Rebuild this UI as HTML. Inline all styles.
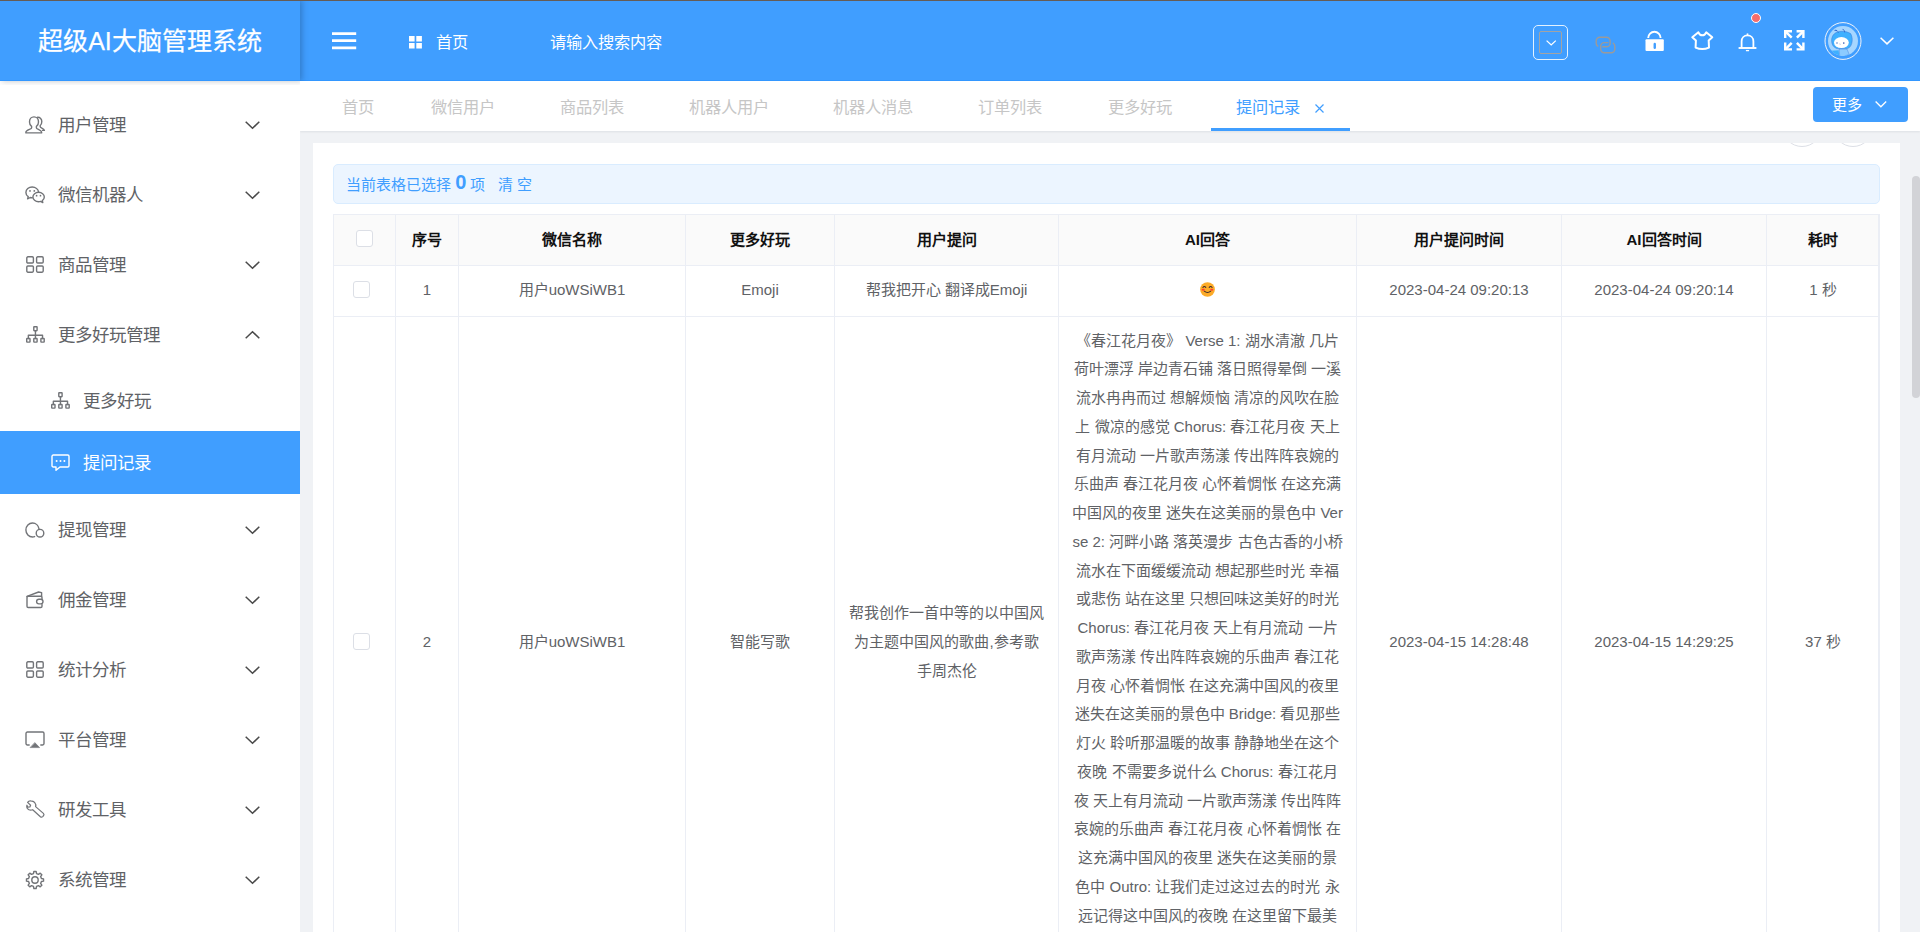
<!DOCTYPE html>
<html lang="zh-CN">
<head>
<meta charset="utf-8">
<title>超级AI大脑管理系统</title>
<style>
*{box-sizing:border-box;margin:0;padding:0}
html,body{width:1920px;height:932px;overflow:hidden;background:#f0f2f5;font-family:"Liberation Sans",sans-serif;color:#606266}
body{position:relative}
svg{display:block;position:absolute;overflow:visible}
body>svg,body>div.hi{z-index:6}
/* ---------- header ---------- */
#top{position:absolute;left:0;top:0;width:1920px;height:81px;background:#409eff;border-bottom:1px solid #3397ff;z-index:4}
#topline{position:absolute;left:0;top:0;width:1920px;height:1px;background:#665c55;z-index:9}
#logo{position:absolute;left:0;top:0;width:300px;height:81px;background:#409eff;border-bottom:1px solid #3397ff;box-shadow:2px 0 6px rgba(0,21,41,.25);clip-path:polygon(0 0,312px 0,312px 81px,300px 81px,300px 85px,0 85px);z-index:5;-webkit-text-stroke:0.25px #fff;color:#fff;font-size:25px;line-height:80px;text-align:center;white-space:nowrap}
#logo span{position:relative;top:0.5px}
.hd{position:absolute;color:#fff;white-space:nowrap;z-index:6}
/* ---------- sidebar ---------- */
#side{position:absolute;left:0;top:80px;width:300px;height:852px;background:#fff;z-index:2}
.mi{position:absolute;left:0;width:300px;height:70px;line-height:70px;font-size:17.5px;color:#606266;white-space:nowrap}
.mi .t{position:absolute;left:58px;top:1px}
.mi.sub{height:63px;line-height:63px}
.mi.sub .t{left:83px}
.mi.act{background:#409eff;color:#fff}
/* ---------- tabs ---------- */
#tabs{position:absolute;left:300px;top:80px;width:1620px;height:51px;background:#fff;box-shadow:0 1px 2px rgba(0,21,41,.08)}
.tab{position:absolute;top:0;height:50px;line-height:54px;font-size:16.25px;color:#c6c6c6;white-space:nowrap}
.tab.on{color:#409eff}
#tabline{position:absolute;left:911px;top:48px;width:139px;height:2.5px;background:#409eff}
#more{position:absolute;left:1513px;top:7px;width:95px;height:35px;border-radius:4px;background:#409eff;color:#fff;font-size:15px;line-height:35px}
#more b{position:absolute;left:19px;top:0;font-weight:normal}
/* ---------- card ---------- */
#card{position:absolute;left:313px;top:143px;width:1587px;height:789px;background:#fff;overflow:hidden}
#alert{position:absolute;left:20px;top:21px;width:1547px;height:40px;border:1px solid #d9ecff;background:#ecf5ff;border-radius:5px;color:#409eff;font-size:15px;line-height:38px;white-space:nowrap}
#alert .a{position:absolute;left:12px;top:-1px}
#alert .n{font-size:20px;font-weight:bold;position:relative;top:-1px}
/* ---------- table ---------- */
#tbl{position:absolute;left:20px;top:71px;width:1547px;border-collapse:separate;border-spacing:0;table-layout:fixed;border-top:1px solid #ebeef5;border-left:1px solid #ebeef5;font-size:15px;color:#606266}
#tbl th,#tbl td{border-right:1px solid #ebeef5;border-bottom:1px solid #ebeef5;text-align:center;vertical-align:middle;padding:0;line-height:28.75px}
#tbl th{height:51px;background:#fafafa;color:#111;font-weight:bold}
#tbl td{background:#fff}
#tbl tr.r1 td{height:51px}
#tbl td{padding-bottom:2px}
.cb{display:inline-block;width:17px;height:17px;border:1px solid #dcdfe6;border-radius:3px;background:#fff;vertical-align:middle}
#tbl td.ans{padding:9.5px 0 10.5px;white-space:nowrap}
.circ{position:absolute;top:-36.5px;width:40px;height:40px;border-radius:50%;border:1px solid #dcdfe6;background:#fff}
/* scrollbar */
#sb{position:absolute;left:1912px;top:176px;width:8px;height:222px;border-radius:4px;background:#d2d3d7}
</style>
</head>
<body>
<div id="top"></div>
<div id="topline"></div>
<div id="logo"><span>超级AI大脑管理系统</span></div>

<!-- header left -->
<svg style="left:332px;top:32px" width="25" height="18" viewBox="0 0 25 18"><path d="M0 1.6H24.2M0 8.6H24.2M0 15.9H24.2" stroke="#fff" stroke-width="2.8" fill="none"/></svg>
<svg style="left:408.8px;top:35.8px" width="12.9" height="12.5" viewBox="0 0 12.9 12.5"><path d="M0 0h5.6v5.4h-5.6zM7.3 0h5.6v5.4h-5.6zM0 7.1h5.6v5.4h-5.6zM7.3 7.1h5.6v5.4h-5.6z" fill="#fff"/></svg>
<div class="hd" style="left:436.4px;top:0;line-height:84px;font-size:16.25px">首页</div>
<div class="hd" style="left:550px;top:0;line-height:84px;font-size:16.25px">请输入搜索内容</div>


<!-- header right -->
<div class="hi" style="position:absolute;left:1533px;top:25px;width:35px;height:35px;border:1px solid rgba(255,255,255,.85);border-radius:5px"></div>
<div class="hi" style="position:absolute;left:1539px;top:31px;width:23px;height:23px;border:1px solid #a3a3a3;border-radius:2px"></div>
<svg style="left:1545.6px;top:39.8px" width="10.4" height="5.6" viewBox="0 0 10.4 5.6"><path d="M0.6 0.6L5.2 4.9L9.8 0.6" stroke="#fff" stroke-width="1.3" fill="none"/></svg>
<svg style="left:1595px;top:35.5px" width="21" height="18" viewBox="0 0 21 18" fill="none" stroke="#9c9a9a" stroke-width="1.4" stroke-linecap="round"><path d="M7.8 10.8H11.5A3.6 3.6 0 0 0 15.1 7.2V4.8A3.6 3.6 0 0 0 11.5 1.2H4.8A3.6 3.6 0 0 0 1.2 4.8V7.2A3.6 3.6 0 0 0 2.7 10.1"/><path d="M12.8 6.6H9.3A3.6 3.6 0 0 0 5.7 10.2V13.1A3.6 3.6 0 0 0 9.3 16.7H16.2A3.6 3.6 0 0 0 19.8 13.1V10.2A3.6 3.6 0 0 0 18.3 7.3"/></svg>
<svg style="left:1644.5px;top:29.8px" width="19" height="22" viewBox="0 0 19 22"><path d="M3.2 8.1V7.95A6.2 6.2 0 0 1 15.6 7.95V8.1" stroke="#fff" stroke-width="1.9" fill="none"/><rect x="0.5" y="9.3" width="18.3" height="11.8" rx="1" fill="#fff"/><rect x="8.55" y="12.8" width="2.4" height="6.1" rx="1.2" fill="#409eff"/></svg>
<svg style="left:1690.5px;top:31px" width="22.6" height="20" viewBox="0 0 22.6 20" fill="none" stroke="#fff" stroke-width="2" stroke-linejoin="round"><path d="M7.4 1.3L1.3 6.3L4.9 9.5L4.6 16.6Q11.3 19.6 18 16.6L17.7 9.5L21.3 6.3L15.2 1.3C14.4 3.3 13 4.3 11.3 4.3C9.6 4.3 8.2 3.3 7.4 1.3Z"/></svg>
<svg style="left:1738px;top:33px" width="19" height="19" viewBox="0 0 19 19" fill="none" stroke="#fff"><path d="M3.6 14.6V8.4C3.6 4.8 6.1 2.4 9.5 2.4C12.9 2.4 15.4 4.8 15.4 8.4V14.6" stroke-width="1.8"/><path d="M0.6 15H18.4" stroke-width="1.9"/><path d="M9.5 0.4V2.6" stroke-width="1.6"/><path d="M7.9 17.6H11.1" stroke-width="1.3"/></svg>
<div class="hi" style="position:absolute;left:1750.8px;top:13px;width:10.4px;height:10.4px;border-radius:50%;background:#f56c6c;border:1px solid #fff"></div>
<svg style="left:1784px;top:30.2px" width="20.6" height="20.6" viewBox="0 0 20.6 20.6" fill="none" stroke="#fff" stroke-width="2.4"><path d="M1.2 8V1.2H8M12.6 1.2H19.4V8M1.2 12.6V19.4H8M19.4 12.6V19.4H12.6" stroke-linejoin="miter"/><path d="M1.8 1.8L7.7 7.7M18.8 1.8L12.9 7.7M1.8 18.8L7.7 12.9M18.8 18.8L12.9 12.9" stroke-width="2.5"/></svg>
<svg style="left:1823.5px;top:22px" width="38" height="38" viewBox="0 0 38 38"><defs><clipPath id="avc"><circle cx="19" cy="19" r="15"/></clipPath></defs><ellipse cx="19" cy="19" rx="18" ry="18.4" fill="none" stroke="#f1f3f8" stroke-width="1"/><circle cx="19" cy="19" r="15" fill="#a6d6ff"/><g clip-path="url(#avc)"><path d="M6.5 28.8L14.6 28.2L15.6 36L4 36Z" fill="#3fb0ff"/><path d="M15 27L23 27L25.2 32.5L20.5 34L20.5 36L16 36Z" fill="#8ccbff" stroke="#3a78d8" stroke-width="0.4"/><path d="M7.6 18.5C7.6 13 11.5 9.3 17.6 9.3C21 9.3 24 10 26.6 11.6C27.8 13.6 28.4 16 28.2 18.6C28 22.6 26.2 25.8 23.4 26.6L12.6 26.6C9.4 25.2 7.6 22.4 7.6 18.5Z" fill="#3fb0ff" stroke="#3a78d8" stroke-width="0.5"/><ellipse cx="17.4" cy="20.6" rx="7.4" ry="5.5" fill="#fff"/><path d="M20.6 10.4C20.6 8.6 20 7.6 18.6 7.4" stroke="#2c62c8" stroke-width="0.9" fill="none"/><path d="M10.6 8.5C11.4 8.1 12.4 8.2 13 8.8" stroke="#2c62c8" stroke-width="1.1" fill="none"/><path d="M13 8.8C14 9.6 14.4 10.4 14.6 11" stroke="#2c62c8" stroke-width="0.5" fill="none"/><circle cx="13" cy="21.1" r="0.75" fill="#4a6fc0"/><circle cx="19.8" cy="21.1" r="0.8" fill="#2f55b0"/><path d="M15.8 21.6L16.2 22.6" stroke="#4a6fc0" stroke-width="0.5" fill="none"/></g></svg>
<svg style="left:1879.5px;top:36.8px" width="14" height="8" viewBox="0 0 14 8"><path d="M0.6 0.7L7 6.9L13.4 0.7" stroke="#fff" stroke-width="1.5" fill="none"/></svg>
<div id="side">
<div class="mi" style="top:9px"><span style="color:#727478"><svg style="left:25px;top:27px" width="20" height="18" viewBox="0 0 20 18" fill="none" stroke="currentColor" stroke-width="1.4" stroke-linejoin="round" stroke-linecap="round"><path d="M6.6 10.4C5.1 9.4 4.5 7.9 4.5 6C4.5 3 6.4 0.9 9 0.9C11.6 0.9 13.5 3 13.5 6C13.5 7.9 12.9 9.4 11.4 10.4L11.4 11.9C11.4 13.1 16.6 13.9 16.6 16.1L16.6 16.9L0.9 16.9L0.9 16.1C0.9 13.9 6.6 13.1 6.6 11.9Z"/><path d="M12.6 1.3C15.1 1.2 16.8 3 16.8 5.5C16.8 7.4 16.2 8.7 15.2 9.5L15.2 10.7C15.2 11.8 19.4 12.5 19.4 14.4L17.6 14.4"/></svg></span><span class="t">用户管理</span><svg style="left:244.5px;top:31.5px" width="15" height="8" viewBox="0 0 15 8" fill="none" stroke="currentColor" stroke-width="1.4" stroke-linejoin="round" stroke-linecap="round"><path d="M0.7 0.7L7.5 7.3L14.3 0.7" stroke-width="1.5" stroke="#4a4a4a" stroke-linecap="butt" stroke-linejoin="miter"/></svg></div>
<div class="mi" style="top:79px"><span style="color:#727478"><svg style="left:25px;top:27px" width="20" height="18" viewBox="0 0 20 18" fill="none" stroke="currentColor" stroke-width="1.4" stroke-linejoin="round" stroke-linecap="round"><path d="M13.6 6.2C13.2 3.3 10.5 1 7.2 1C3.7 1 0.9 3.4 0.9 6.4C0.9 8.1 1.8 9.6 3.2 10.6L2.6 12.9L5.2 11.5C5.8 11.7 6.5 11.8 7.2 11.8"/><path d="M13.6 6.3C16.8 6.3 19.3 8.4 19.3 11C19.3 12.4 18.5 13.7 17.3 14.6L17.8 16.6L15.6 15.4C15 15.6 14.3 15.7 13.6 15.7C10.4 15.7 7.9 13.6 7.9 11C7.9 8.4 10.4 6.3 13.6 6.3Z"/><g fill="currentColor" stroke="none"><circle cx="5" cy="4.9" r="0.9"/><circle cx="9.3" cy="4.9" r="0.9"/><circle cx="11.6" cy="9.7" r="0.85"/><circle cx="15.5" cy="9.7" r="0.85"/></g></svg></span><span class="t">微信机器人</span><svg style="left:244.5px;top:31.5px" width="15" height="8" viewBox="0 0 15 8" fill="none" stroke="currentColor" stroke-width="1.4" stroke-linejoin="round" stroke-linecap="round"><path d="M0.7 0.7L7.5 7.3L14.3 0.7" stroke-width="1.5" stroke="#4a4a4a" stroke-linecap="butt" stroke-linejoin="miter"/></svg></div>
<div class="mi" style="top:149px"><span style="color:#727478"><svg style="left:26px;top:27px" width="18" height="17" viewBox="0 0 18 17" fill="none" stroke="currentColor" stroke-width="1.4" stroke-linejoin="round" stroke-linecap="round"><rect x="0.8" y="0.8" width="6.6" height="6.2" rx="1.1"/><rect x="10.6" y="0.8" width="6.6" height="6.2" rx="1.1"/><rect x="0.8" y="10" width="6.6" height="6.2" rx="1.1"/><rect x="10.6" y="10" width="6.6" height="6.2" rx="1.1"/></svg></span><span class="t">商品管理</span><svg style="left:244.5px;top:31.5px" width="15" height="8" viewBox="0 0 15 8" fill="none" stroke="currentColor" stroke-width="1.4" stroke-linejoin="round" stroke-linecap="round"><path d="M0.7 0.7L7.5 7.3L14.3 0.7" stroke-width="1.5" stroke="#4a4a4a" stroke-linecap="butt" stroke-linejoin="miter"/></svg></div>
<div class="mi" style="top:219px"><span style="color:#727478"><svg style="left:25.5px;top:27.3px" width="18.9" height="16.8" viewBox="0 0 18.9 16.8" fill="none" stroke="currentColor" stroke-width="1.4" stroke-linejoin="round" stroke-linecap="round"><rect x="7.8" y="0.7" width="3.3" height="4" rx="0.4"/><path d="M9.45 4.7V9.3M2.35 12.5V9.3H16.55V12.5M9.45 9.3V12.5"/><rect x="0.7" y="12.5" width="3.3" height="3.6" rx="0.4"/><rect x="7.8" y="12.5" width="3.3" height="3.6" rx="0.4"/><rect x="14.9" y="12.5" width="3.3" height="3.6" rx="0.4"/></svg></span><span class="t">更多好玩管理</span><svg style="left:244.5px;top:32px" width="15" height="8" viewBox="0 0 15 8" fill="none" stroke="currentColor" stroke-width="1.4" stroke-linejoin="round" stroke-linecap="round"><path d="M0.7 7.3L7.5 0.7L14.3 7.3" stroke-width="1.5" stroke="#4a4a4a" stroke-linecap="butt" stroke-linejoin="miter"/></svg></div>
<div class="mi sub" style="top:289px"><span style="color:#727478"><svg style="left:50.5px;top:23.3px" width="18.9" height="16.8" viewBox="0 0 18.9 16.8" fill="none" stroke="currentColor" stroke-width="1.4" stroke-linejoin="round" stroke-linecap="round"><rect x="7.8" y="0.7" width="3.3" height="4" rx="0.4"/><path d="M9.45 4.7V9.3M2.35 12.5V9.3H16.55V12.5M9.45 9.3V12.5"/><rect x="0.7" y="12.5" width="3.3" height="3.6" rx="0.4"/><rect x="7.8" y="12.5" width="3.3" height="3.6" rx="0.4"/><rect x="14.9" y="12.5" width="3.3" height="3.6" rx="0.4"/></svg></span><span class="t">更多好玩</span></div>
<div class="mi sub act" style="top:351px"><span style="color:#fff"><svg style="left:50.5px;top:22.5px" width="19" height="17.5" viewBox="0 0 19 17.5" fill="none" stroke="currentColor" stroke-width="1.4" stroke-linejoin="round" stroke-linecap="round"><path d="M1 2.3C1 1.6 1.6 1 2.3 1H16.7C17.4 1 18 1.6 18 2.3V11.7C18 12.4 17.4 13 16.7 13H9L5 16.3V13H2.3C1.6 13 1 12.4 1 11.7Z"/><g fill="currentColor" stroke="none"><circle cx="5.6" cy="7" r="1"/><circle cx="9.5" cy="7" r="1"/><circle cx="13.4" cy="7" r="1"/></g></svg></span><span class="t">提问记录</span></div>
<div class="mi" style="top:414px"><span style="color:#727478"><svg style="left:25px;top:27.5px" width="20" height="16" viewBox="0 0 20 16" fill="none" stroke="currentColor" stroke-width="1.4" stroke-linejoin="round" stroke-linecap="round"><path d="M9.6 14.6C8.9 14.9 8.2 15 7.5 15C3.9 15 0.9 11.9 0.9 8C0.9 4.1 3.9 1 7.5 1C10.8 1 13.5 3.5 14 6.8"/><circle cx="15" cy="11.2" r="3.8"/></svg></span><span class="t">提现管理</span><svg style="left:244.5px;top:31.5px" width="15" height="8" viewBox="0 0 15 8" fill="none" stroke="currentColor" stroke-width="1.4" stroke-linejoin="round" stroke-linecap="round"><path d="M0.7 0.7L7.5 7.3L14.3 0.7" stroke-width="1.5" stroke="#4a4a4a" stroke-linecap="butt" stroke-linejoin="miter"/></svg></div>
<div class="mi" style="top:484px"><span style="color:#727478"><svg style="left:26px;top:26.5px" width="18" height="17.5" viewBox="0 0 18 17.5" fill="none" stroke="currentColor" stroke-width="1.4" stroke-linejoin="round" stroke-linecap="round"><path d="M1 5.4L12.6 1L15.6 1.6V5.2"/><path d="M16 8.2V6.4C16 5.7 15.5 5.2 14.8 5.2H2.2C1.5 5.2 1 5.7 1 6.4V15.3C1 16 1.5 16.5 2.2 16.5H14.8C15.5 16.5 16 16 16 15.3V13.4"/><rect x="10.6" y="8.3" width="6.4" height="4.6" rx="2.3"/></svg></span><span class="t">佣金管理</span><svg style="left:244.5px;top:31.5px" width="15" height="8" viewBox="0 0 15 8" fill="none" stroke="currentColor" stroke-width="1.4" stroke-linejoin="round" stroke-linecap="round"><path d="M0.7 0.7L7.5 7.3L14.3 0.7" stroke-width="1.5" stroke="#4a4a4a" stroke-linecap="butt" stroke-linejoin="miter"/></svg></div>
<div class="mi" style="top:554px"><span style="color:#727478"><svg style="left:26px;top:27px" width="18" height="17" viewBox="0 0 18 17" fill="none" stroke="currentColor" stroke-width="1.4" stroke-linejoin="round" stroke-linecap="round"><rect x="0.8" y="0.8" width="6.6" height="6.2" rx="1.1"/><rect x="10.6" y="0.8" width="6.6" height="6.2" rx="1.1"/><rect x="0.8" y="10" width="6.6" height="6.2" rx="1.1"/><rect x="10.6" y="10" width="6.6" height="6.2" rx="1.1"/></svg></span><span class="t">统计分析</span><svg style="left:244.5px;top:31.5px" width="15" height="8" viewBox="0 0 15 8" fill="none" stroke="currentColor" stroke-width="1.4" stroke-linejoin="round" stroke-linecap="round"><path d="M0.7 0.7L7.5 7.3L14.3 0.7" stroke-width="1.5" stroke="#4a4a4a" stroke-linecap="butt" stroke-linejoin="miter"/></svg></div>
<div class="mi" style="top:624px"><span style="color:#727478"><svg style="left:25px;top:27px" width="20" height="17.5" viewBox="0 0 20 17.5" fill="none" stroke="currentColor" stroke-width="1.4" stroke-linejoin="round" stroke-linecap="round"><path d="M4.2 14H2.4C1.6 14 1 13.4 1 12.6V2.4C1 1.6 1.6 1 2.4 1H17.6C18.4 1 19 1.6 19 2.4V12.6C19 13.4 18.4 14 17.6 14H15.8"/><path d="M10 11.8L14.6 16.6H5.4Z" fill="currentColor" stroke-width="0.6"/></svg></span><span class="t">平台管理</span><svg style="left:244.5px;top:31.5px" width="15" height="8" viewBox="0 0 15 8" fill="none" stroke="currentColor" stroke-width="1.4" stroke-linejoin="round" stroke-linecap="round"><path d="M0.7 0.7L7.5 7.3L14.3 0.7" stroke-width="1.5" stroke="#4a4a4a" stroke-linecap="butt" stroke-linejoin="miter"/></svg></div>
<div class="mi" style="top:694px"><span style="color:#727478"><svg style="left:26px;top:26px" width="18.5" height="18" viewBox="0 0 18.5 18" fill="none" stroke="currentColor" stroke-width="1.4" stroke-linejoin="round" stroke-linecap="round"><path d="M6.1 1.2C4.4 0.6 2.5 1 1.6 2.4L4.6 5.2L3.9 6.9L1.8 7.1L0.9 5.2C0.5 7 1.2 8.9 2.9 9.7C4.2 10.3 5.5 10.2 6.7 9.7L14.4 16.7C15.1 17.3 16.1 17.2 16.7 16.6L17.6 15.5C18.1 14.9 18 14 17.4 13.4L9.6 6.6C10 5.3 9.8 3.9 8.9 2.8C8.2 2 7.2 1.4 6.1 1.2Z" stroke-width="1.2"/></svg></span><span class="t">研发工具</span><svg style="left:244.5px;top:31.5px" width="15" height="8" viewBox="0 0 15 8" fill="none" stroke="currentColor" stroke-width="1.4" stroke-linejoin="round" stroke-linecap="round"><path d="M0.7 0.7L7.5 7.3L14.3 0.7" stroke-width="1.5" stroke="#4a4a4a" stroke-linecap="butt" stroke-linejoin="miter"/></svg></div>
<div class="mi" style="top:764px"><span style="color:#727478"><svg style="left:26px;top:26.5px" width="18" height="18" viewBox="0 0 18 18" fill="none" stroke="currentColor" stroke-width="1.4" stroke-linejoin="round" stroke-linecap="round"><path d="M7.46 2.58 L7.86 0.48 L10.14 0.48 L10.54 2.58 L12.45 3.37 L14.22 2.16 L15.84 3.78 L14.63 5.55 L15.42 7.46 L17.52 7.86 L17.52 10.14 L15.42 10.54 L14.63 12.45 L15.84 14.22 L14.22 15.84 L12.45 14.63 L10.54 15.42 L10.14 17.52 L7.86 17.52 L7.46 15.42 L5.55 14.63 L3.78 15.84 L2.16 14.22 L3.37 12.45 L2.58 10.54 L0.48 10.14 L0.48 7.86 L2.58 7.46 L3.37 5.55 L2.16 3.78 L3.78 2.16 L5.55 3.37Z"/><circle cx="9" cy="9" r="3.2"/></svg></span><span class="t">系统管理</span><svg style="left:244.5px;top:31.5px" width="15" height="8" viewBox="0 0 15 8" fill="none" stroke="currentColor" stroke-width="1.4" stroke-linejoin="round" stroke-linecap="round"><path d="M0.7 0.7L7.5 7.3L14.3 0.7" stroke-width="1.5" stroke="#4a4a4a" stroke-linecap="butt" stroke-linejoin="miter"/></svg></div>
</div>
<div id="tabs">
<div class="tab" style="left:41.5px">首页</div>
<div class="tab" style="left:131px">微信用户</div>
<div class="tab" style="left:260px">商品列表</div>
<div class="tab" style="left:388.5px">机器人用户</div>
<div class="tab" style="left:533px">机器人消息</div>
<div class="tab" style="left:678px">订单列表</div>
<div class="tab" style="left:807.5px">更多好玩</div>
<div class="tab on" style="left:936px">提问记录</div>
<svg style="left:1014.5px;top:24px" width="9" height="9" viewBox="0 0 9 9"><path d="M0.5 0.5L8.5 8.5M8.5 0.5L0.5 8.5" stroke="#409eff" stroke-width="1.2" fill="none"/></svg>
<div id="tabline"></div>
<div id="more"><b>更多</b><svg style="left:61.7px;top:14.3px" width="11.8" height="6.4" viewBox="0 0 11.8 6.4"><path d="M0.6 0.6L5.9 5.7L11.2 0.6" stroke="#fff" stroke-width="1.35" fill="none"/></svg></div>
</div>
<div id="card">
<div class="circ" style="left:1468.5px"></div><div class="circ" style="left:1520px"></div>
<div id="alert"><span class="a">当前表格已选择 <span class="n">0</span> 项&nbsp;&nbsp;&nbsp;清 空</span></div>
<div style="position:absolute;left:1565px;top:71px;width:2px;height:720px;background:#ebeef5;z-index:2"></div>
<table id="tbl"><colgroup><col style="width:62px"><col style="width:63px"><col style="width:227px"><col style="width:149px"><col style="width:224px"><col style="width:298px"><col style="width:205px"><col style="width:205px"><col style="width:113px"></colgroup>
<tr><th><span class="cb" style="position:relative;left:-0.2px;top:-2px"></span></th><th>序号</th><th>微信名称</th><th>更多好玩</th><th>用户提问</th><th>AI回答</th><th>用户提问时间</th><th>AI回答时间</th><th>耗时</th></tr>
<tr class="r1"><td><span class="cb" style="position:relative;left:-3.2px;top:-1px"></span></td><td>1</td><td>用户uoWSiWB1</td><td>Emoji</td><td>帮我把开心 翻译成Emoji</td><td><svg style="position:relative;display:inline-block;vertical-align:middle;top:-1px" width="15" height="15" viewBox="0 0 15 15"><circle cx="7.5" cy="7.5" r="7.35" fill="#fcab28"/><path d="M2.9 5.5Q4.3 3.6 5.8 5.4M9.2 5.4Q10.7 3.6 12.1 5.5" stroke="#3b2a2e" stroke-width="1.05" fill="none" stroke-linecap="round"/><path d="M4.3 9.2Q7.5 11.9 10.7 9.2" stroke="#3b2a2e" stroke-width="1.05" fill="none" stroke-linecap="round"/><ellipse cx="3.2" cy="7.7" rx="1.55" ry="0.95" fill="#ff3b2f"/><ellipse cx="11.8" cy="7.7" rx="1.55" ry="0.95" fill="#ff3b2f"/></svg></td><td>2023-04-24 09:20:13</td><td>2023-04-24 09:20:14</td><td>1 秒</td></tr>
<tr class="r2"><td><span class="cb" style="position:relative;left:-3.2px;top:-1px"></span></td><td>2</td><td>用户uoWSiWB1</td><td>智能写歌</td><td>帮我创作一首中等的以中国风<br>为主题中国风的歌曲,参考歌<br>手周杰伦</td><td class="ans">《春江花月夜》 Verse 1: 湖水清澈 几片<br>荷叶漂浮 岸边青石铺 落日照得晕倒 一溪<br>流水冉冉而过 想解烦恼 清凉的风吹在脸<br>上 微凉的感觉 Chorus: 春江花月夜 天上<br>有月流动 一片歌声荡漾 传出阵阵哀婉的<br>乐曲声 春江花月夜 心怀着惆怅 在这充满<br>中国风的夜里 迷失在这美丽的景色中 Ver<br>se 2: 河畔小路 落英漫步 古色古香的小桥<br>流水在下面缓缓流动 想起那些时光 幸福<br>或悲伤 站在这里 只想回味这美好的时光<br>Chorus: 春江花月夜 天上有月流动 一片<br>歌声荡漾 传出阵阵哀婉的乐曲声 春江花<br>月夜 心怀着惆怅 在这充满中国风的夜里<br>迷失在这美丽的景色中 Bridge: 看见那些<br>灯火 聆听那温暖的故事 静静地坐在这个<br>夜晚 不需要多说什么 Chorus: 春江花月<br>夜 天上有月流动 一片歌声荡漾 传出阵阵<br>哀婉的乐曲声 春江花月夜 心怀着惆怅 在<br>这充满中国风的夜里 迷失在这美丽的景<br>色中 Outro: 让我们走过这过去的时光 永<br>远记得这中国风的夜晚 在这里留下最美<br>的回忆</td><td>2023-04-15 14:28:48</td><td>2023-04-15 14:29:25</td><td>37 秒</td></tr>
</table>
</div>
<div id="sb"></div>
</body>
</html>
